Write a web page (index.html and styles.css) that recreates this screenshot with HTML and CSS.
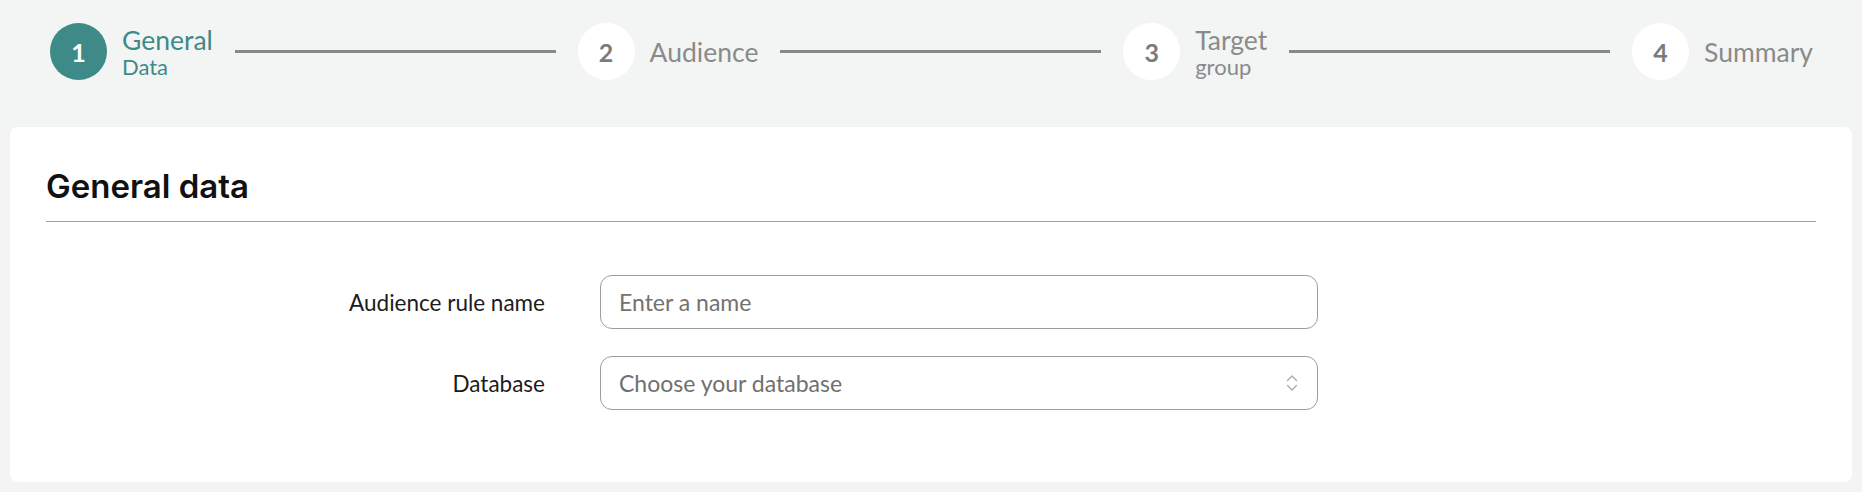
FILE: index.html
```html
<!DOCTYPE html>
<html lang="en">
<head>
    <meta charset="UTF-8">
    <meta name="viewport" content="width=device-width, initial-scale=1.0">
    <title>New audience rule</title>
    <link rel="stylesheet" href="styles.css">
</head>
<body>

<div class="stepper">
    <div class="step active">
        <div class="step-circle">1</div>
        <div class="step-text">
            <div class="step-title">General</div>
            <div class="step-sub">Data</div>
        </div>
    </div>
    <div class="step-line"></div>
    <div class="step">
        <div class="step-circle">2</div>
        <div class="step-text">
            <div class="step-title">Audience</div>
        </div>
    </div>
    <div class="step-line"></div>
    <div class="step">
        <div class="step-circle">3</div>
        <div class="step-text">
            <div class="step-title">Target</div>
            <div class="step-sub">group</div>
        </div>
    </div>
    <div class="step-line"></div>
    <div class="step">
        <div class="step-circle">4</div>
        <div class="step-text">
            <div class="step-title">Summary</div>
        </div>
    </div>
</div>

<div class="card">
    <h2 class="card-title">General data</h2>

    <div class="form">
        <label class="form-label" for="rule-name">Audience rule name</label>
        <input type="text" id="rule-name" class="form-input" placeholder="Enter a name">

        <label class="form-label" for="database">Database</label>
        <div class="select-wrap">
            <select id="database" class="form-input form-select">
                <option value="">Choose your database</option>
            </select>
            <svg class="select-icon" width="12" height="20" viewBox="0 0 12 20">
                <path d="M1.5 7.5 L6 3 L10.5 7.5" fill="none" stroke="#ababab" stroke-width="1.4" stroke-linecap="round" stroke-linejoin="round"/>
                <path d="M1.5 12.5 L6 17 L10.5 12.5" fill="none" stroke="#ababab" stroke-width="1.4" stroke-linecap="round" stroke-linejoin="round"/>
            </svg>
        </div>
    </div>
</div>

</body>
</html>
```

FILE: styles.css
```css
body {
    font-family: Lato, "Open Sans", sans-serif;
    background-color: #f3f5f4;
    margin: 0;
    color: #1c1c1c;
}

/* stepper */
.stepper {
    display: flex;
    align-items: center;
    padding: 23px 49px 0 50px;
    height: 57px;
}

.step {
    display: flex;
    align-items: center;
    color: #8a8a8a;
}

.step-circle {
    width: 57px;
    height: 57px;
    border-radius: 50%;
    background-color: #fff;
    color: #7b7b7b;
    display: flex;
    justify-content: center;
    align-items: center;
    font-size: 25px;
    font-weight: 700;
}

.step-text {
    margin-left: 15px;
}

.step-title {
    font-size: 26.5px;
    line-height: 30px;
}

.step-sub {
    font-size: 22px;
    line-height: 24px;
}

.step.active {
    color: #3e8a89;
}

.step.active .step-circle {
    background-color: #3e8a89;
    color: #fff;
}

.step-line {
    flex: 1;
    height: 3px;
    background-color: #888;
    margin: 0 22px;
}

/* card */
.card {
    background-color: #fff;
    margin: 47px 10px 10px;
    border-radius: 8px;
    padding: 39px 36px 72px;
}

.card-title {
    font-family: Inter, sans-serif;
    font-size: 33px;
    font-weight: 600;
    line-height: 40px;
    color: #111;
    margin: 0;
    padding-bottom: 15px;
    border-bottom: 1px solid #a3a3a3;
}

.form {
    display: grid;
    grid-template-columns: 499px 718px;
    column-gap: 55px;
    row-gap: 27px;
    align-items: center;
    margin-top: 53px;
}

.form-label {
    text-align: right;
    font-size: 22.5px;
    color: #1c1c1c;
}

.form-input {
    box-sizing: border-box;
    width: 100%;
    height: 54px;
    padding: 0 18px;
    border: 1px solid #9d9d9d;
    border-radius: 12px;
    background-color: #fff;
    font-family: Lato, "Open Sans", sans-serif;
    font-size: 23px;
    color: #707070;
    outline: none;
}

.form-input::placeholder {
    color: #727272;
}

.select-wrap {
    position: relative;
}

.form-select {
    appearance: none;
    -webkit-appearance: none;
}

.select-icon {
    position: absolute;
    right: 20px;
    top: 17px;
    pointer-events: none;
}
```
